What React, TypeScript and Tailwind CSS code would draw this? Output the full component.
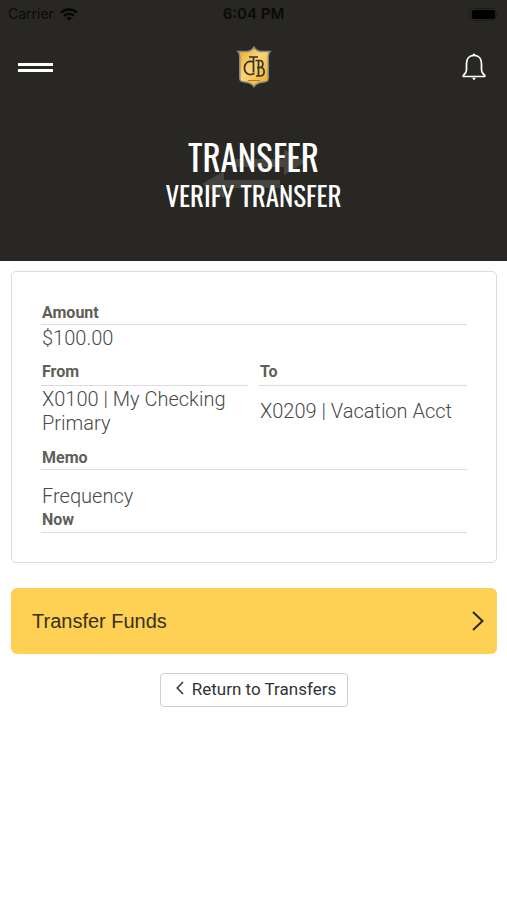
import type { ReactNode } from "react";

function Wifi() {
  return (
    <svg viewBox="0 0 18 13" className="h-[13px] w-[18px]" fill="none" stroke="#050505" strokeWidth="2.4" aria-hidden="true">
      <path d="M1 4.6C5.4.4 12.6.4 17 4.6" />
      <path d="M4 7.8c2.8-2.6 7.2-2.6 10 0" />
      <path d="M9 12.6 6.2 9.9c1.6-1.3 4-1.3 5.6 0z" fill="#050505" stroke="none" />
    </svg>
  );
}

function Battery() {
  return (
    <svg viewBox="0 0 30 13" className="h-[13px] w-[30px]" aria-hidden="true">
      <rect x="1" y=".5" width="26" height="12" rx="3.5" fill="none" stroke="#1c1b18" />
      <rect x="3" y="2" width="23" height="9" rx="2" fill="#000" />
      <path d="M28 4.5v4c1.6-.6 1.6-3.4 0-4z" fill="#1c1b18" />
    </svg>
  );
}

function Shield() {
  return (
    <svg viewBox="0 0 36 42" className="h-[42px] w-9" role="img" aria-label="Bank logo">
      <defs>
        <linearGradient id="gold" x1="0" y1="0" x2="1" y2="1">
          <stop offset="0" stopColor="#e9a722" />
          <stop offset=".45" stopColor="#fbd477" />
          <stop offset="1" stopColor="#eba81f" />
        </linearGradient>
      </defs>
      <path
        d="M18 1.2c1.5 2.5 3.5 4 6.5 4.3H34c-1.6 1.5-1.8 3.5-1.8 6.5v20c0 3-1.2 3.8-4.5 4-4.7.3-7.7 1.7-9.7 4.7-2-3-5-4.4-9.7-4.7-3.3-.2-4.500-1-4.500-4V12c0-3-.2-5-1.8-6.500h9.500c3-.3 5-1.800 6.500-4.300z"
        fill="url(#gold)"
        stroke="#8b8983"
        strokeWidth="1.5"
      />
      <g fill="none" stroke="#35322a" strokeWidth="1.7">
        <path d="M13 11h9M17.500 11v15.500" />
        <path d="M18 16c-6.500-2-9.500 1.500-9.500 6s3.500 8.500 10 5.500" />
        <path d="M19.500 14.500h4c4.500 0 4.500 7 0 7H21h3c5.500 0 5.500 8.500 0 8.500h-4M22.500 14.500V30" />
      </g>
      <path d="M12 34.500h12" stroke="#a97d25" strokeWidth="1" />
    </svg>
  );
}

function Bell() {
  return (
    <svg viewBox="0 0 24 28" className="h-7 w-6" fill="none" stroke="#fff" strokeWidth="1.7" strokeLinejoin="round" aria-hidden="true">
      <path d="M12 2.3c-5 0-7.500 3.700-7.500 8.200v6.500c0 2.500-1.200 3.800-3.200 5.500v1h21.400v-1c-2-1.700-3.200-3-3.200-5.500v-6.500c0-4.500-2.500-8.200-7.500-8.200z" />
      <path d="M12 .8v1.500" strokeWidth="2.5" />
      <path d="M11 25.300h2l-1 1z" fill="#fff" strokeWidth="1.2" />
    </svg>
  );
}

function TransferArrows() {
  return (
    <svg viewBox="0 0 104 56" className="absolute top-3 left-1/2 h-14 w-[104px] -translate-x-1/2" fill="#454440" aria-hidden="true">
      <path d="M28 13h54V3l22 13-22 13v-8H28z" />
      <path d="M78 34H22v-9L0 38l22 14V42h56z" />
    </svg>
  );
}

function Label({ children }: { children: ReactNode }) {
  return <dt className="text-base leading-5 font-bold text-[#5f5e59]">{children}</dt>;
}

function Value({ children }: { children: ReactNode }) {
  return <dd className="text-xl leading-6 font-light text-[#4a4a49]">{children}</dd>;
}

export default function App() {
  return (
    <div className="min-h-screen bg-white font-['Roboto',sans-serif]">
      <header className="bg-[#282723] pb-[49px]">
        <div className="grid h-7 grid-cols-3 items-center px-2 font-['Inter',sans-serif] text-sm text-[#0a0a09]">
          <div className="flex items-center gap-1.5">
            <span>Carrier</span>
            <Wifi />
          </div>
          <span className="text-center text-[15px] font-semibold">6:04 PM</span>
          <div className="flex justify-end">
            <Battery />
          </div>
        </div>
        <nav className="grid h-[78px] grid-cols-3 items-center px-[18px]">
          <button type="button" aria-label="Menu" className="flex w-[35px] flex-col gap-[3px]">
            <span className="h-[3px] w-full bg-white" />
            <span className="h-[3px] w-full bg-white" />
          </button>
          <div className="flex justify-center">
            <Shield />
          </div>
          <div className="flex justify-end">
            <button type="button" aria-label="Notifications" className="mr-[3px]">
              <Bell />
            </button>
          </div>
        </nav>
        <div className="relative mt-7 text-center font-['Oswald',sans-serif] text-white">
          <TransferArrows />
          <h1 className="relative text-[35px] leading-[44px]">TRANSFER</h1>
          <h2 className="relative text-[27px] leading-[34px]">VERIFY TRANSFER</h2>
        </div>
      </header>

      <main className="pt-[10px] pr-[10px] pl-[11px]">
        <dl className="rounded-[5px] border border-[#dcdcdc] px-[29px] pt-[31px] pb-[29px]">
          <div className="mb-3">
            <div className="border-b border-[#dcdcdc] pb-px pl-px">
              <Label>Amount</Label>
            </div>
            <div className="pt-px pl-px">
              <Value>$100.00</Value>
            </div>
          </div>
          <div className="mb-[13px] grid grid-cols-[207px_1fr] gap-x-[11px]">
            <div>
              <div className="border-b border-[#dcdcdc] pb-[3px] pl-px">
                <Label>From</Label>
              </div>
              <div className="pt-px pl-px">
                <Value>X0100 | My Checking Primary</Value>
              </div>
            </div>
            <div className="flex flex-col">
              <div className="border-b border-[#dcdcdc] pb-[3px] pl-px">
                <Label>To</Label>
              </div>
              <div className="flex grow items-center pt-px pl-px">
                <Value>X0209 | Vacation Acct</Value>
              </div>
            </div>
          </div>
          <div className="mb-[14px] border-b border-[#dcdcdc] pb-px pl-px">
            <Label>Memo</Label>
          </div>
          <div className="flex flex-col-reverse gap-0.5 border-b border-[#dcdcdc] pb-0.5 pl-px">
            <Label>Now</Label>
            <Value>Frequency</Value>
          </div>
        </dl>

        <button
          type="button"
          className="mt-[25px] flex h-[66px] w-full items-center justify-between rounded-md bg-[#fed155] pr-[13px] pl-[21px] font-['Liberation_Sans',sans-serif] text-xl text-[#38301a]"
        >
          Transfer Funds
          <svg viewBox="0 0 12 20" className="h-5 w-3" fill="none" stroke="#29261c" strokeWidth="2" aria-hidden="true">
            <path d="m1 1 9.500 9L1 19" />
          </svg>
        </button>
        <div className="mt-[19px] flex justify-center">
          <button
            type="button"
            className="flex h-[34px] items-center gap-2 rounded-[4px] border border-[#cfcfcf] pr-[11px] pl-[15px] text-[17px] text-[#333]"
          >
            <svg viewBox="0 0 8 14" className="mb-1 h-3.5 w-2" fill="none" stroke="#333" strokeWidth="1.5" aria-hidden="true">
              <path d="M7 1 1.200 7 7 13" />
            </svg>
            Return to Transfers
          </button>
        </div>
      </main>
    </div>
  );
}
